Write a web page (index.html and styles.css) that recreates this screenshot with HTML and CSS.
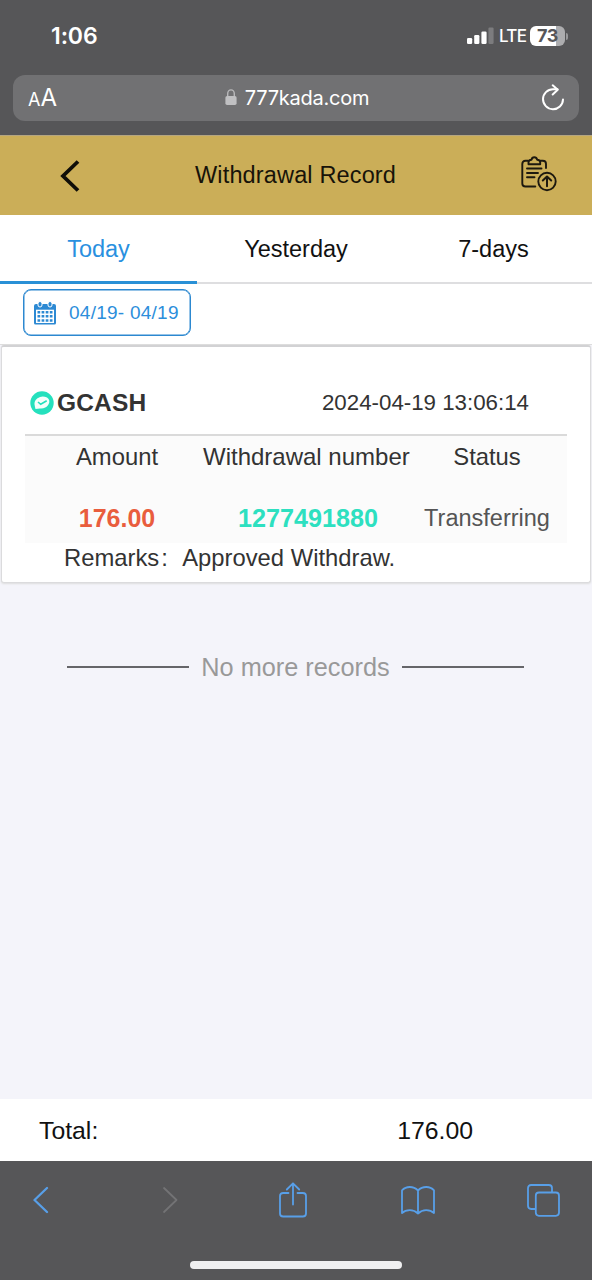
FILE: index.html
```html
<!DOCTYPE html>
<html lang="en">
<head>
<meta charset="utf-8">
<title>Withdrawal Record</title>
<link rel="stylesheet" href="styles.css">
</head>
<body>
<div class="phone">
  <div class="browser-top">
    <div class="status-bar">
      <span class="clock">1:06</span>
      <div class="indicators">
        <svg class="signal" width="27" height="18" viewBox="0 0 27 18"><g fill="#fff"><rect x="0" y="11" width="5.2" height="6" rx="1.3"/><rect x="7.2" y="8" width="5.2" height="9" rx="1.3"/><rect x="14.4" y="4.5" width="5.2" height="12.500" rx="1.3"/></g><rect x="21.400" y="0.500" width="5.200" height="16.500" rx="1.3" fill="#7c7c7e"/></svg>
        <span class="network">LTE</span>
        <span class="battery">73</span><span class="battery-tip"></span>
      </div>
    </div>
    <div class="address-bar">
      <span class="text-size"><small>A</small>A</span>
      <div class="address">
        <svg width="12" height="17" viewBox="0 0 12 17"><path d="M2.700 8V4.800a3.300 3.900 0 0 1 6.600 0V8" fill="none" stroke="#b9b9bb" stroke-width="1.400"/><rect x="0.400" y="7" width="11.200" height="9" rx="1.700" fill="#c0c0c2"/></svg>
        <span>777kada.com</span>
      </div>
      <svg class="reload" width="24" height="27" viewBox="0 0 24 27" fill="none" stroke="#fff" stroke-width="2" stroke-linecap="round" stroke-linejoin="round"><path d="M22 15.500a10 10 0 1 1-10-10.300h4.500"/><path d="M11.700 1.300l5 4.500-5 4.700"/></svg>
    </div>
  </div>

  <header class="title-bar">
    <svg class="back" width="20" height="32" viewBox="0 0 20 32" fill="none" stroke="#100e08" stroke-width="3.800"><path d="M18 1.500L3 16l15 14.500"/></svg>
    <h1>Withdrawal Record</h1>
    <svg class="record-icon" width="36" height="36" viewBox="0 0 36 36" fill="none" stroke="#1d190f" stroke-width="1.900" stroke-linecap="round" stroke-linejoin="round"><path d="M7 4.800H4.500Q1.300 4.800 1.300 8v19.500Q1.300 30.500 4.500 30.500h9.800M19.500 4.800h2.300Q25 4.800 25 8v4"/><path d="M7.500 8.200V6.500q0-2.700 3-2.700Q11 1.300 13.300 1.300t2.900 2.500q3 0 3 2.700v1.700z"/><path d="M6 12.500h14.500M6 17h11M6 21.300h7.500"/><circle cx="26" cy="25.500" r="8.700"/><path d="M26 30.300v-9.400M21.800 24.500l4.200-4 4.200 4" stroke-width="2"/></svg>
  </header>

  <nav class="tabs">
    <span class="tab active">Today</span>
    <span class="tab">Yesterday</span>
    <span class="tab">7-days</span>
  </nav>
  <div class="filter">
    <div class="date-range">
      <svg width="22" height="24" viewBox="0 0 22 24"><path d="M0 5Q0 3 2 3H20Q22 3 22 5V22Q22 23.500 20.500 23.500H1.500Q0 23.500 0 22Z" fill="#2c89d3"/><rect x="2" y="8.700" width="18" height="13.300" fill="#fff"/><g fill="#2c89d3" stroke="#fff" stroke-width="1"><rect x="4" y="0.500" width="4" height="5.500" rx="2"/><rect x="14" y="0.500" width="4" height="5.500" rx="2"/></g><path d="M3.500 11.200h15M3.500 15.300h15M3.500 19.400h15" stroke="#2c89d3" stroke-width="2.500" stroke-dasharray="2.700 1.400"/></svg>
      <span>04/19- 04/19</span>
    </div>
  </div>

  <main class="records">
    <article class="card">
      <div class="card-head">
        <svg width="24" height="24" viewBox="0 0 24 24"><circle cx="12" cy="12" r="11.700" fill="#25e0bd"/><path d="M5 16Q3 10.500 7.500 7.200Q12 4 17 6.500Q21 9.500 18.300 13.800Q15.500 18 10 17.500L5.500 18Z" fill="#f5fffc"/><path d="M8 11l2.700 2.300 6-3.500" fill="none" stroke="#25e0bd" stroke-width="1.600"/></svg>
        <strong>GCASH</strong>
        <time>2024-04-19 13:06:14</time>
      </div>
      <div class="details">
        <span>Amount</span><span class="wide">Withdrawal number</span><span>Status</span>
        <span class="value amount">176.00</span><span class="value number">1277491880</span><span class="value state">Transferring</span>
      </div>
      <div class="remarks"><span class="label">Remarks</span><span class="colon">:</span><span>Approved Withdraw.</span></div>
    </article>
    <p class="end"><span>No more records</span></p>
  </main>

  <footer class="total"><span>Total:</span><span>176.00</span></footer>

  <div class="browser-bottom">
    <div class="toolbar">
      <svg width="16" height="28" viewBox="0 0 16 28" fill="none" stroke="#589fe8" stroke-width="2.300" stroke-linecap="round" stroke-linejoin="round"><path d="M14 2L1.500 14 14 26"/></svg>
      <svg width="16" height="28" viewBox="0 0 16 28" fill="none" stroke="#737375" stroke-width="1.800" stroke-linecap="round" stroke-linejoin="round"><path d="M2 2l12.500 12L2 26"/></svg>
      <svg width="28" height="36" viewBox="0 0 28 36" fill="none" stroke="#589fe8" stroke-width="1.800" stroke-linecap="round" stroke-linejoin="round"><path d="M9.500 11H4.200Q1 11 1 14v17.500q0 3 3.200 3h19.600q3.200 0 3.200-3V14q0-3-3.200-3h-5.300M14 22.500V1.500M7.800 7.500L14 1.300l6.200 6.200"/></svg>
      <svg width="34" height="29" viewBox="0 0 34 29" fill="none" stroke="#589fe8" stroke-width="1.800" stroke-linejoin="round" stroke-linecap="round"><path d="M17 4.500Q13.500 1 8.800 1T1 4.300V27Q4 24.200 8.800 24.200T17 27.500Q20.500 24.200 25.200 24.200T33 27V4.300Q30 1 25.200 1T17 4.500V27.500"/></svg>
      <svg width="33" height="33" viewBox="0 0 33 33" fill="none" stroke="#589fe8" stroke-width="1.800"><path d="M8.500 25H4.200Q1 25 1 21.800V4.200Q1 1 4.200 1h17.600Q25 1 25 4.200V8"/><rect x="8.800" y="8.500" width="23.200" height="23.300" rx="3.200"/></svg>
    </div>
    <div class="home-bar"></div>
  </div>
</div>
</body>
</html>
```
FILE: styles.css
```css
* { box-sizing: border-box; }
body { margin: 0; font-family: "Liberation Sans", Arial, sans-serif; color: #333; background: #f4f4fa; }
svg { display: block; flex: none; }
.phone { width: 592px; height: 1280px; display: flex; flex-direction: column; overflow: hidden; white-space: nowrap; }

.browser-top { height: 136px; background: #565658; border-bottom: 1px solid #b5a681; color: #fff; font-family: Inter, sans-serif; padding: 0 13px; flex: none; }
.status-bar { height: 75px; display: flex; justify-content: space-between; padding: 0 11px 0 38px; }
.clock { font-size: 23px; line-height: 28px; font-weight: 600; padding-top: 22px; letter-spacing: -.1px; }
.indicators { display: flex; height: 20px; margin-top: 26px; align-items: center; }
.signal { margin-right: 5px; }
.network { font-size: 17px; font-weight: 500; width: 31px; letter-spacing: -.7px; }
.battery { width: 35px; height: 20px; border-radius: 6px; background: linear-gradient(90deg, #fff 74%, #adadaf 74%); color: #565658; font-size: 18px; line-height: 20px; font-weight: 700; text-align: center; letter-spacing: -.5px; }
.battery-tip { width: 2px; height: 7px; margin-left: 1px; border-radius: 0 2px 2px 0; background: #99999b; }
.address-bar { height: 46px; border-radius: 12px; background: #717173; display: grid; grid-template-columns: 60px 1fr 60px; align-items: center; padding: 0 14px 0 15px; }
.text-size { font-size: 24px; line-height: 46px; height: 46px; }
.text-size small { font-size: 18px; }
.address { display: flex; align-items: center; gap: 8px; justify-content: center; height: 46px; padding-left: 1px; font-size: 20px; letter-spacing: -.25px; }
.address svg { margin-top: -1px; }
.reload { justify-self: end; margin-top: -2px; }

.title-bar { height: 79px; background: #cbae58; display: flex; align-items: center; padding: 0 35px 1px 60px; flex: none; color: #171309; }
.title-bar h1 { font-weight: 400; font-size: 23.500px; letter-spacing: .15px; margin: 1px auto 0 115px; }
.record-icon { margin-bottom: 2px; }
.back { margin-top: 1px; }
.tabs { height: 69px; flex: none; background: #fff; display: grid; grid-template-columns: 197px 198px 197px; color: #111; font-size: 23.500px; text-align: center; }
.tab { line-height: 69px; border-bottom: 2px solid #dedee0; height: 69px; }
.tab.active { color: #2990df; border-bottom: 3px solid #2990d6; }
.filter { height: 61px; padding: 5px 0 0 23px; background: #fff; border-bottom: 1px solid #ddd; flex: none; }
.date-range { width: 168px; height: 47px; border: 1px solid #2c88d0; box-shadow: inset 0 0 0 .5px #2c88d0; border-radius: 8px; display: flex; align-items: center; gap: 13px; padding-left: 10px; color: #2c8edb; font-size: 19px; letter-spacing: .25px; }

.records { flex: 1; min-height: 0; background: #f4f4fa; }
.card { height: 238px; margin: 0 1px; background: #fff; border: 1px solid #dbdbdd; border-top: 2px solid #d2d2d4; border-radius: 3px; box-shadow: 0 1px 2px #ddd; padding: 0 23px; font-size: 23.800px; }
.card-head { height: 89px; display: flex; align-items: center; padding: 24px 38px 0 5px; border-bottom: 2px solid #dadada; }
.card-head strong { margin-left: 3px; font-size: 24.500px; letter-spacing: .15px; }
.card-head time { margin-left: auto; font-size: 22.300px; }
.details { height: 107px; background: #fbfbfb; display: grid; grid-template-columns: 184px 198px 160px; grid-template-rows: 43px 64px; text-align: center; line-height: 42px; }
.wide { font-size: 24px; margin-left: -6px; }
.value { padding-top: 18px; }
.amount { color: #e95d3d; font-weight: 700; font-size: 25px; }
.number { color: #2de0c0; font-weight: 700; font-size: 25.200px; }
.state { color: #555; font-size: 23.500px; }
.remarks { display: flex; line-height: 30px; padding-left: 39px; }
.colon { width: 23px; padding-left: 2px; }
.end { margin: 68px 68px 0 67px; display: flex; align-items: center; gap: 12px; font-size: 25.300px; line-height: 32px; color: #999; }
.end::before, .end::after { content: ""; height: 2px; background: #656569; flex: 1; }
.total { height: 62px; flex: none; background: #fff; display: flex; align-items: center; color: #111; font-size: 24.800px; padding: 1px 119px 0 39px; justify-content: space-between; }
.browser-bottom { height: 119px; background: #565658; flex: none; padding-top: 16px; }
.toolbar { height: 46px; display: grid; grid-template-columns: 129px 117px 122px 126px 33px; align-items: center; padding-left: 33px; }
.home-bar { width: 212px; height: 8px; border-radius: 4px; background: #efeff0; margin: 38px auto 0; }
```
